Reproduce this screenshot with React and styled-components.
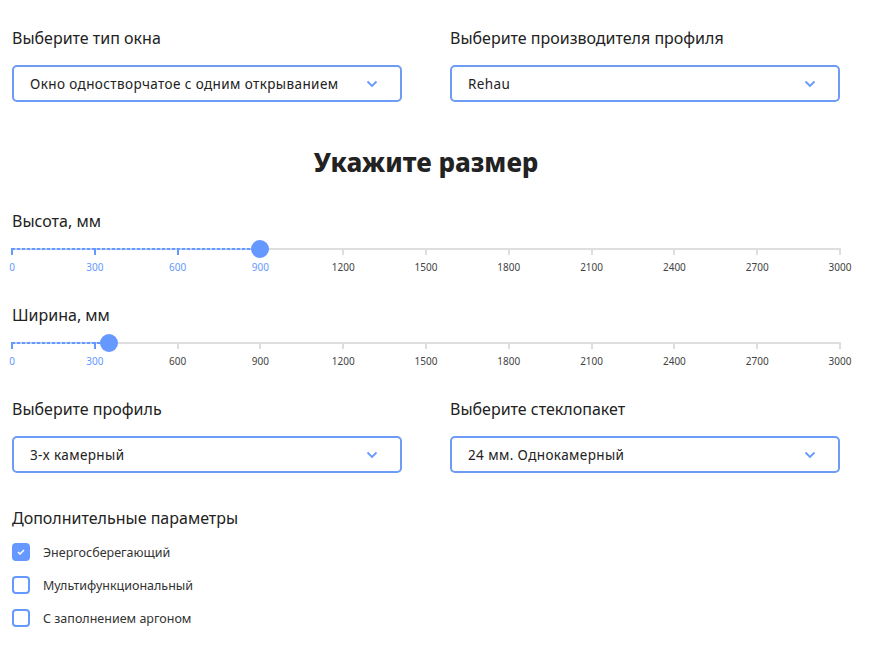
import React, { useState } from "react";
import styled, { createGlobalStyle } from "styled-components";

const GlobalStyle = createGlobalStyle`
  body {
    margin: 0;
    background: #fff;
    font-family: "Noto Sans", "Open Sans", sans-serif;
    color: #222;
  }
`;

const BLUE = "#6699ff";
const TICKS = [0, 300, 600, 900, 1200, 1500, 1800, 2100, 2400, 2700, 3000];
const MAX = 3000;

const Container = styled.div`
  width: 828px;
  padding: 27px 12px 20px;
`;

const Row = styled.div`
  display: grid;
  grid-template-columns: 390px 390px;
  column-gap: 48px;
`;

const Field = styled.div`
  display: flex;
  flex-direction: column;
`;

const Label = styled.div`
  font-size: 16px;
  line-height: 22px;
  color: #222;
  margin-bottom: 16px;
`;

const Select = styled.div`
  height: 37px;
  box-sizing: border-box;
  border: 2px solid #6e9cf5;
  border-radius: 5px;
  display: flex;
  align-items: center;
  justify-content: space-between;
  padding: 0 22px 0 16px;
  font-size: 13.5px;
  letter-spacing: 0.4px;
  color: #222;
`;

const Chevron = () => (
  <svg width="12" height="8" viewBox="0 0 12 8">
    <path d="M1.5 1.5 L6 6 L10.5 1.5" fill="none" stroke={BLUE} strokeWidth="1.8" />
  </svg>
);

const Title = styled.h2`
  margin: 42px 0 30px;
  text-align: center;
  font-size: 26px;
  line-height: 36px;
  font-weight: 800;
  color: #222;
`;

const SliderBlock = styled.div`
  margin-bottom: 30px;
`;

const SliderLabel = styled.div`
  font-size: 16px;
  line-height: 22px;
  margin-bottom: 6px;
`;

const Track = styled.div`
  position: relative;
  height: 2px;
  margin-top: 16px;
  background: #dedede;
`;

const Fill = styled.div`
  position: absolute;
  left: 0;
  top: 0;
  height: 2px;
  background: repeating-linear-gradient(90deg, ${BLUE} 0 3px, #b9cffc 3px 5px);
`;

const Tick = styled.div`
  position: absolute;
  top: 0;
  width: 2px;
  margin-left: -1px;
  height: 7px;
  background: ${(p) => (p.active ? BLUE : "#dedede")};
`;

const Thumb = styled.div`
  position: absolute;
  top: 1px;
  width: 18px;
  height: 18px;
  margin: -9px 0 0 -9px;
  border-radius: 50%;
  background: ${BLUE};
`;

const Marks = styled.div`
  position: relative;
  height: 14px;
  margin-top: 10px;
`;

const Mark = styled.span`
  position: absolute;
  top: 0;
  transform: translateX(-50%);
  font-size: 10px;
  line-height: 14px;
  color: ${(p) => (p.active ? BLUE : "#444")};
`;

const Slider = ({ label, value }) => {
  const pct = (v) => `${(v / MAX) * 100}%`;
  return (
    <SliderBlock>
      <SliderLabel>{label}</SliderLabel>
      <Track>
        <Fill style={{ width: pct(value) }} />
        {TICKS.map((t) => (
          <Tick key={t} active={t <= value} style={{ left: pct(t) }} />
        ))}
        <Thumb style={{ left: pct(value) }} />
      </Track>
      <Marks>
        {TICKS.map((t) => (
          <Mark key={t} active={t <= value} style={{ left: pct(t) }}>
            {t}
          </Mark>
        ))}
      </Marks>
    </SliderBlock>
  );
};

const Extra = styled.div`
  margin-top: 34px;
`;

const CheckList = styled.div`
  display: flex;
  flex-direction: column;
  gap: 15px;
  margin-top: -2px;
`;

const CheckRow = styled.label`
  display: flex;
  align-items: center;
  gap: 13px;
  font-size: 12.5px;
  color: #333;
`;

const Box = styled.span`
  width: 18px;
  height: 18px;
  box-sizing: border-box;
  border-radius: 4px;
  border: 2px solid ${BLUE};
  background: ${(p) => (p.checked ? BLUE : "#fff")};
  display: flex;
  align-items: center;
  justify-content: center;
`;

const Check = ({ checked, children }) => (
  <CheckRow>
    <Box checked={checked}>
      {checked && (
        <svg width="8" height="6" viewBox="0 0 8 6">
          <path d="M1 3 L3 5 L7 1" fill="none" stroke="#fff" strokeWidth="1.5" />
        </svg>
      )}
    </Box>
    {children}
  </CheckRow>
);

const App = () => {
  const [opts] = useState([true, false, false]);
  return (
    <Container>
      <GlobalStyle />
      <Row>
        <Field>
          <Label>Выберите тип окна</Label>
          <Select>
            Окно одностворчатое с одним открыванием
            <Chevron />
          </Select>
        </Field>
        <Field>
          <Label>Выберите производителя профиля</Label>
          <Select>
            Rehau
            <Chevron />
          </Select>
        </Field>
      </Row>
      <Title>Укажите размер</Title>
      <Slider label="Высота, мм" value={900} />
      <Slider label="Ширина, мм" value={350} />
      <Row>
        <Field>
          <Label>Выберите профиль</Label>
          <Select>
            3-х камерный
            <Chevron />
          </Select>
        </Field>
        <Field>
          <Label>Выберите стеклопакет</Label>
          <Select>
            24 мм. Однокамерный
            <Chevron />
          </Select>
        </Field>
      </Row>
      <Extra>
        <Label>Дополнительные параметры</Label>
        <CheckList>
          <Check checked={opts[0]}>Энергосберегающий</Check>
          <Check checked={opts[1]}>Мультифункциональный</Check>
          <Check checked={opts[2]}>С заполнением аргоном</Check>
        </CheckList>
      </Extra>
    </Container>
  );
};

export default App;
